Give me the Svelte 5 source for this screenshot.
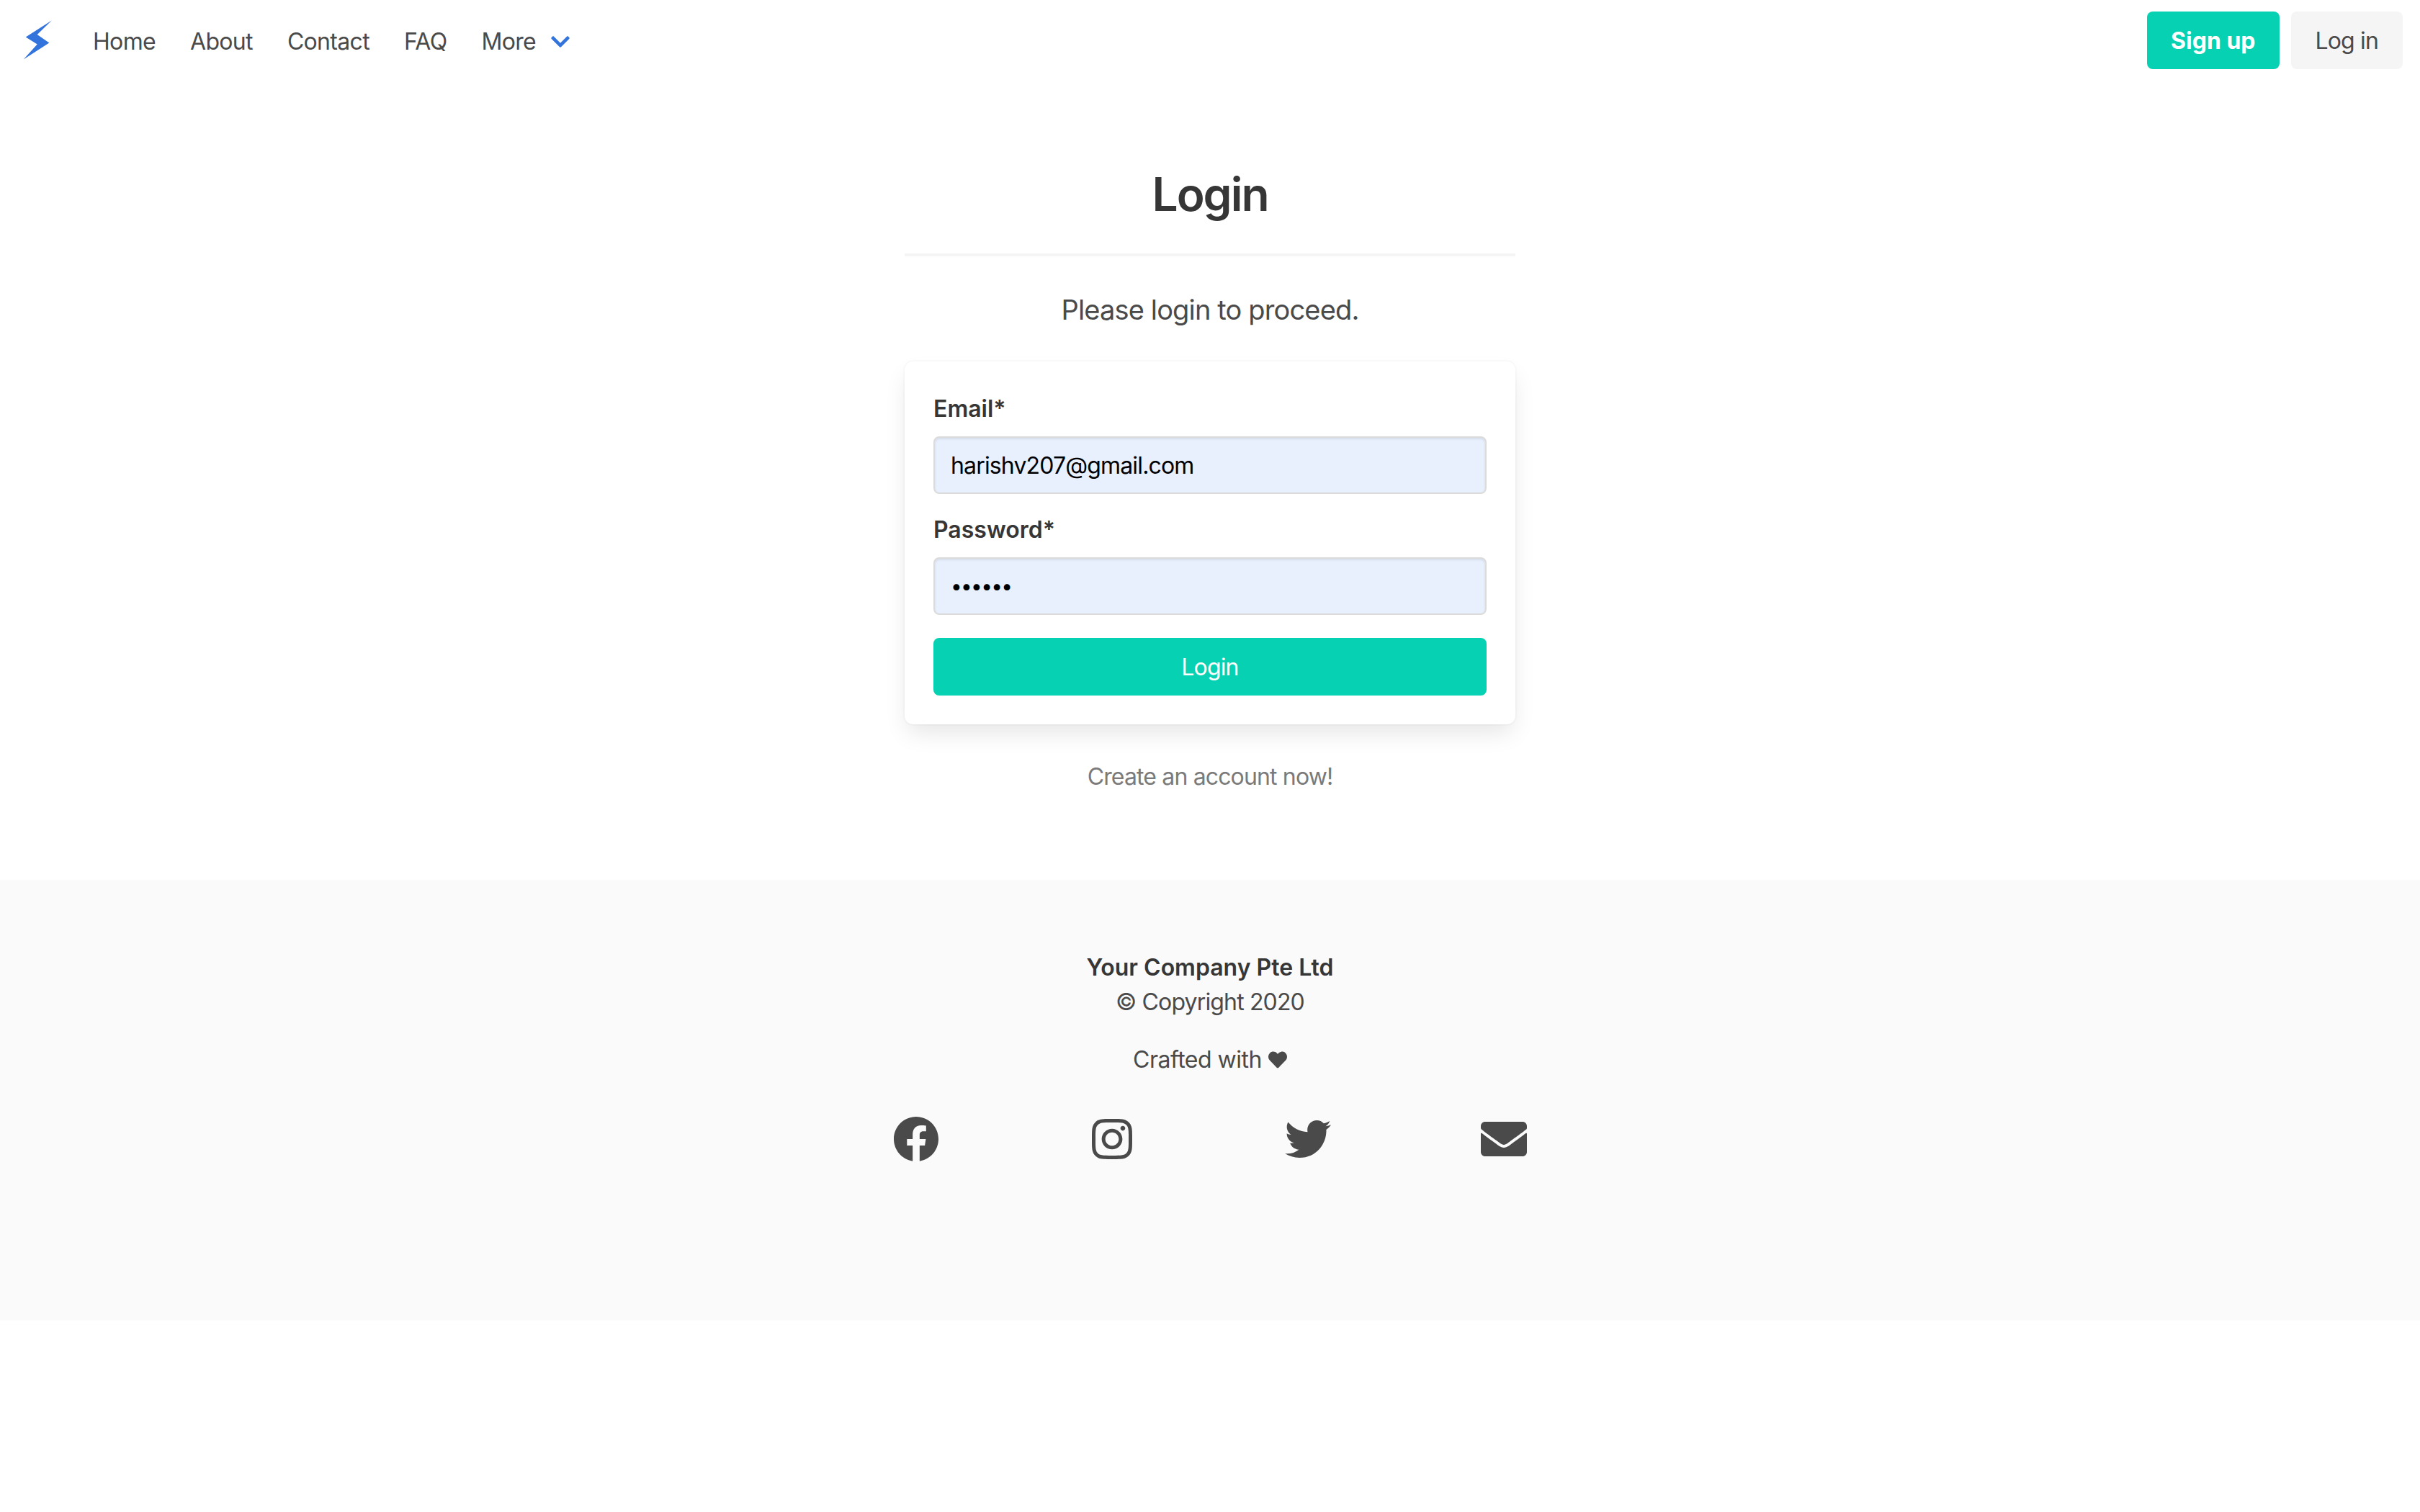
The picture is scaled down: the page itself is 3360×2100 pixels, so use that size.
<script>
  const navItems = ['Home', 'About', 'Contact', 'FAQ'];

  const socials = [
    { id: 'facebook', box: '0 0 512 512', width: 64, d: 'M504 256C504 119 393 8 256 8S8 119 8 256c0 123.78 90.69 226.38 209.25 245V327.69h-63V256h63v-54.64c0-62.15 37-96.48 93.67-96.48 27.14 0 55.52 4.84 55.52 4.84v61h-31.28c-30.8 0-40.41 19.12-40.41 38.73V256h68.78l-11 71.69h-57.78V501C413.31 482.38 504 379.78 504 256z' },
    { id: 'instagram', box: '0 0 448 512', width: 56, d: 'M224.1 141c-63.6 0-114.9 51.3-114.9 114.9s51.3 114.9 114.9 114.9S339 319.5 339 255.9 287.7 141 224.1 141zm0 189.6c-41.1 0-74.7-33.5-74.7-74.7s33.5-74.7 74.7-74.7 74.7 33.5 74.7 74.7-33.6 74.7-74.7 74.7zm146.4-194.3c0 14.9-12 26.8-26.8 26.8-14.9 0-26.8-12-26.8-26.8s12-26.8 26.8-26.8 26.8 12 26.8 26.8zm76.1 27.2c-1.7-35.9-9.9-67.7-36.2-93.9-26.2-26.2-58-34.4-93.9-36.2-37-2.1-147.9-2.1-184.9 0-35.8 1.7-67.6 9.9-93.9 36.1s-34.4 58-36.2 93.9c-2.1 37-2.1 147.9 0 184.9 1.7 35.9 9.9 67.7 36.2 93.9s58 34.4 93.9 36.2c37 2.1 147.9 2.1 184.9 0 35.9-1.7 67.7-9.9 93.9-36.2 26.2-26.2 34.4-58 36.2-93.9 2.1-37 2.1-147.8 0-184.8zM398.8 388c-7.8 19.6-22.9 34.7-42.6 42.6-29.5 11.7-99.5 9-132.1 9s-102.7 2.6-132.1-9c-19.6-7.8-34.7-22.9-42.6-42.6-11.7-29.5-9-99.5-9-132.1s-2.6-102.7 9-132.1c7.8-19.6 22.9-34.7 42.6-42.6 29.5-11.7 99.5-9 132.1-9s102.7-2.6 132.1 9c19.6 7.8 34.7 22.9 42.6 42.6 11.7 29.5 9 99.5 9 132.1s2.7 102.7-9 132.1z' },
    { id: 'twitter', box: '0 0 512 512', width: 64, d: 'M459.37 151.716c.325 4.548.325 9.097.325 13.645 0 138.72-105.583 298.558-298.558 298.558-59.452 0-114.68-17.219-161.137-47.106 8.447.974 16.568 1.299 25.34 1.299 49.055 0 94.213-16.568 130.274-44.832-46.132-.975-84.792-31.188-98.112-72.772 6.498.974 12.995 1.624 19.818 1.624 9.421 0 18.843-1.3 27.614-3.573-48.081-9.747-84.143-51.98-84.143-102.985v-1.299c13.969 7.797 30.214 12.67 47.431 13.319-28.264-18.843-46.781-51.005-46.781-87.391 0-19.492 5.197-37.36 14.294-52.954 51.655 63.675 129.3 105.258 216.365 109.807-1.624-7.797-2.599-15.918-2.599-24.04 0-57.828 46.782-104.934 104.934-104.934 30.213 0 57.502 12.67 76.67 33.137 23.715-4.548 46.456-13.32 66.599-25.34-7.798 24.366-24.366 44.833-46.132 57.827 21.117-2.273 41.584-8.122 60.426-16.243-14.292 20.791-32.161 39.308-52.628 54.253z' },
    { id: 'envelope', box: '0 0 512 512', width: 64, d: 'M502.3 190.8c3.9-3.1 9.7-.2 9.7 4.7V400c0 26.5-21.5 48-48 48H48c-26.5 0-48-21.5-48-48V195.6c0-5 5.7-7.8 9.7-4.7 22.4 17.4 52.1 39.5 154.1 113.6 21.1 15.4 56.7 47.8 92.2 47.6 35.7.3 72-32.8 92.3-47.6 102-74.1 131.6-96.3 154-113.7zM256 320c23.2.4 56.6-29.2 73.4-41.4 132.7-96.3 142.8-104.7 173.4-128.7 5.8-4.5 9.2-11.5 9.2-18.9v-19c0-26.5-21.5-48-48-48H48C21.5 64 0 85.5 0 112v19c0 7.4 3.4 14.3 9.2 18.9 30.6 23.9 40.7 32.4 173.4 128.7 16.8 12.2 50.2 41.8 73.4 41.4z' }
  ];
</script>

<nav class="navbar">
  <div class="nav-start">
    <a class="logo" href="#top" aria-label="Home">
      <svg viewBox="0 0 40 56" width="40" height="56">
        <polygon points="39.7,0.5 19.7,20 36.3,31.5 0.7,54.5 19.7,33.5 3.7,23.5" />
      </svg>
    </a>
    {#each navItems as item}
      <a class="nav-item" href="#top">{item}</a>
    {/each}
    <a class="nav-item more" href="#top">
      More
      <svg viewBox="0 0 448 512" width="26" height="30">
        <path d="M207.029 381.476L12.686 187.132c-9.373-9.373-9.373-24.569 0-33.941l22.667-22.667c9.357-9.357 24.522-9.375 33.901-.04L224 284.505l154.745-154.021c9.379-9.335 24.544-9.317 33.901.04l22.667 22.667c9.373 9.373 9.373 24.569 0 33.941L240.971 381.476c-9.373 9.372-24.569 9.372-33.942 0z" />
      </svg>
    </a>
  </div>
  <div class="nav-end">
    <button class="btn primary strong">Sign up</button>
    <button class="btn light">Log in</button>
  </div>
</nav>

<main class="section">
  <div class="container">
    <h1 class="title">Login</h1>
    <hr />
    <p class="subtitle">Please login to proceed.</p>
    <form class="box">
      <div class="field">
        <label for="email">Email*</label>
        <input id="email" type="email" value="harishv207@gmail.com" />
      </div>
      <div class="field">
        <label for="password">Password*</label>
        <input id="password" class="secret" type="password" value="secret" />
      </div>
      <button type="button" class="btn primary full">Login</button>
    </form>
    <p class="signup-link">Create an account now!</p>
  </div>
</main>

<footer class="footer">
  <p class="company">Your Company Pte Ltd</p>
  <p>© Copyright 2020</p>
  <p class="crafted">
    Crafted with
    <svg viewBox="0 0 512 512" width="26" height="26">
      <path d="M462.3 62.6C407.5 15.9 326 24.3 275.7 76.2L256 96.5l-19.7-20.3C186.1 24.3 104.5 15.9 49.7 62.6c-62.8 53.6-66.1 149.8-9.9 207.9l193.5 199.8c12.5 12.9 32.8 12.9 45.3 0l193.5-199.8c56.3-58.1 53-154.3-9.8-207.9z" />
    </svg>
  </p>
  <div class="socials">
    {#each socials as icon}
      <a class="social" href="#top" aria-label={icon.id}>
        <svg viewBox={icon.box} width={icon.width} height="64">
          <path d={icon.d} />
        </svg>
      </a>
    {/each}
  </div>
</footer>

<style>
  :global(body) {
    margin: 0;
    background: #fff;
    color: #4a4a4a;
    font-family: Inter, "Noto Sans", sans-serif;
    font-size: 32px;
    font-weight: 380;
    line-height: 48px;
    letter-spacing: -0.85px;
  }

  a {
    color: inherit;
    text-decoration: none;
  }

  p {
    margin: 0;
  }

  /* Navbar */
  .navbar {
    display: flex;
    justify-content: space-between;
    align-items: center;
    height: 112px;
    padding-right: 24px;
  }

  .nav-start {
    display: flex;
    align-items: center;
  }

  .logo {
    display: flex;
    padding-left: 32px;
    padding-right: 33px;
  }

  .logo svg {
    fill: #3273dc;
  }

  .nav-item {
    padding: 3px 24px 0;
    letter-spacing: -0.67px;
  }

  .more {
    display: flex;
    align-items: center;
    gap: 21px;
  }

  .more svg {
    fill: #3273dc;
  }

  .nav-end {
    display: flex;
    gap: 16px;
  }

  /* Buttons */
  .btn {
    height: 80px;
    padding: 0 33px;
    border: none;
    border-radius: 8px;
    font-family: inherit;
    font-size: 32px;
    font-weight: 380;
    letter-spacing: -0.85px;
    cursor: pointer;
  }

  .primary {
    background: #06d2b3;
    color: #fff;
  }

  .strong {
    font-weight: 700;
    letter-spacing: 0;
  }

  .light {
    padding: 0 34px;
    background: #f5f5f5;
    color: #4a4a4a;
  }

  .full {
    display: block;
    width: 100%;
    margin-top: 32px;
  }

  /* Login section */
  .section {
    padding: 122px 0 119px;
  }

  .container {
    width: 848px;
    margin: 0 auto;
    text-align: center;
  }

  .title {
    margin: 0;
    color: #363636;
    font-size: 64px;
    font-weight: 600;
    line-height: 72px;
    letter-spacing: -2px;
  }

  hr {
    height: 4px;
    margin: 46px 0 44px;
    border: none;
    background: #f5f5f5;
  }

  .subtitle {
    font-size: 38px;
    line-height: 60px;
    margin-bottom: 42px;
  }

  .box {
    padding: 40px;
    border-radius: 12px;
    background: #fff;
    box-shadow: 0 16px 32px -4px rgba(10, 10, 10, 0.1), 0 0 0 2px rgba(10, 10, 10, 0.02);
    text-align: left;
  }

  .field + .field {
    margin-top: 24px;
  }

  label {
    display: block;
    margin-bottom: 16px;
    padding-top: 2px;
    height: 46px;
    color: #363636;
    font-weight: 600;
    letter-spacing: 0;
  }

  input {
    display: block;
    box-sizing: border-box;
    width: 100%;
    height: 80px;
    padding: 0 22px;
    border: 2px solid #dbdbdb;
    border-radius: 8px;
    outline: none;
    background: #e8f0fe;
    box-shadow: inset 0 1.5px 3px rgba(10, 10, 10, 0.1);
    color: #000;
    font-family: inherit;
    font-size: 32px;
    font-weight: 380;
    letter-spacing: -0.85px;
  }

  .secret {
    font-size: 28px;
    letter-spacing: -1.7px;
  }

  .signup-link {
    margin-top: 49px;
    color: #7a7a7a;
  }

  /* Footer */
  .footer {
    box-sizing: border-box;
    height: 612px;
    padding-top: 98px;
    background: #fafafa;
    text-align: center;
  }

  .company {
    color: #363636;
    font-weight: 600;
    letter-spacing: 0;
  }

  .crafted {
    display: flex;
    justify-content: center;
    align-items: center;
    gap: 9px;
    margin-top: 32px;
    letter-spacing: -0.5px;
  }

  .crafted svg {
    fill: #4a4a4a;
  }

  .socials {
    display: grid;
    grid-template-columns: repeat(4, 272px);
    justify-content: center;
    margin-top: 54px;
  }

  .social {
    display: flex;
    justify-content: center;
    height: 64px;
  }

  .social svg {
    fill: #4a4a4a;
  }
</style>
